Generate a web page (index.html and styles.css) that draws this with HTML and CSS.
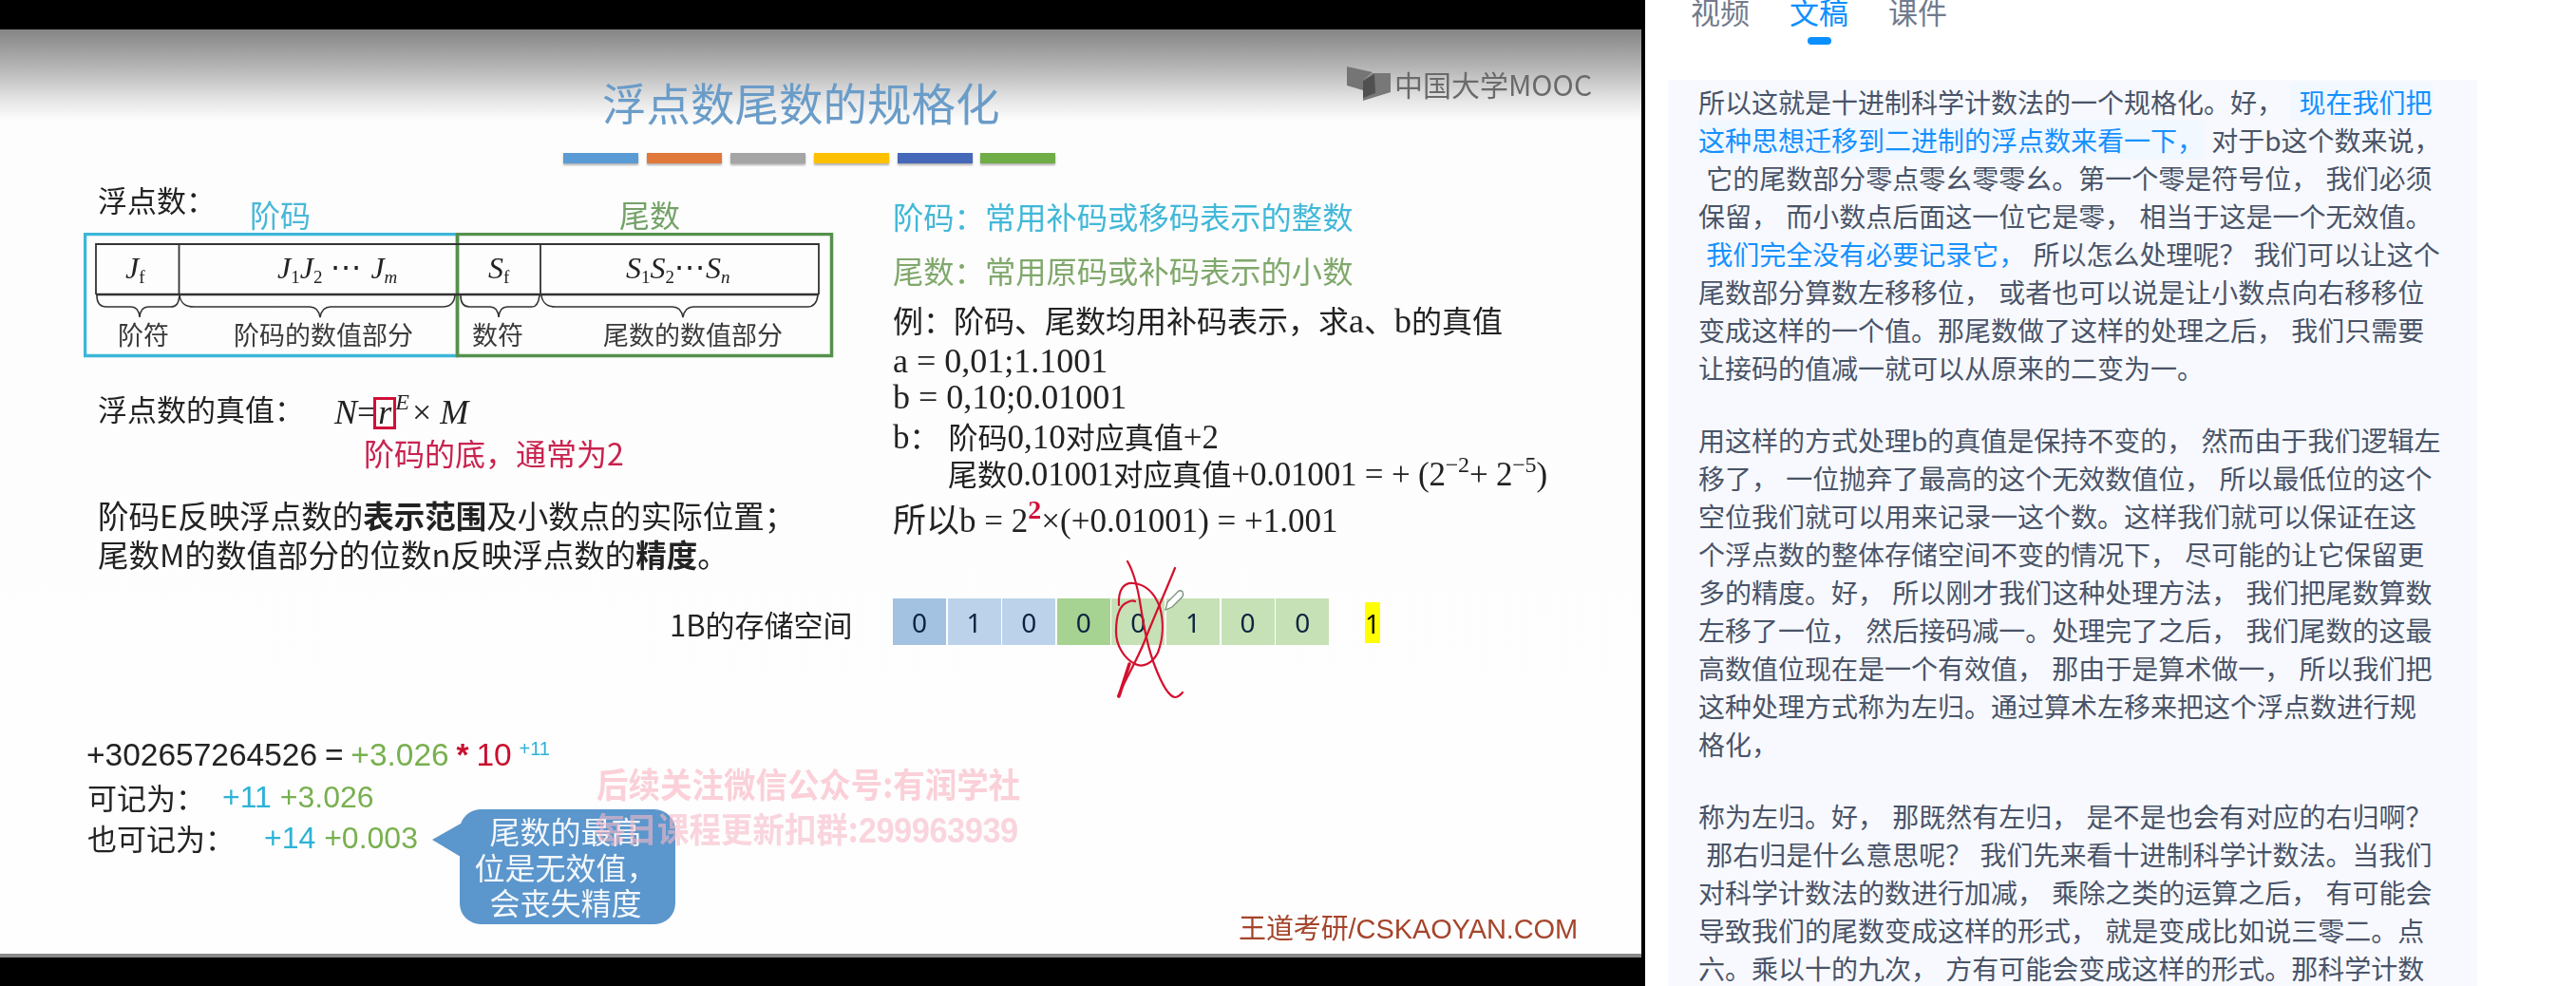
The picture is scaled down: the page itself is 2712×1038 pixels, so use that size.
FILE: index.html
```html
<!DOCTYPE html>
<html lang="zh-CN">
<head>
<meta charset="utf-8">
<title>浮点数尾数的规格化</title>
<link rel="stylesheet" href="styles.css">
</head>
<body>
<div class="page">
  <section class="video">
    <div class="slide">
      <h1 class="item title">浮点数尾数的规格化</h1>
      <div class="item bars">
        <i class="bar bar-blue"></i><i class="bar bar-orange"></i><i class="bar bar-gray"></i><i class="bar bar-yellow"></i><i class="bar bar-indigo"></i><i class="bar bar-green"></i>
      </div>
      <div class="item logo">
        <svg class="logo-mark" viewBox="0 0 46 36" width="46" height="36">
          <path class="logo-a" d="M0 0 L27 6 L17 15 L17 25 L0 20 Z"/>
          <path class="logo-b" d="M27 7 L46 7 L46 27 L17 36 L17 15 Z"/>
          <path class="logo-c" d="M17 15 L29 8 L30 28 L17 33 Z"/>
        </svg>
        <span class="logo-text">中国大学MOOC</span>
      </div>

      <div class="item t31 fu">浮点数：</div>
      <div class="item t32 jm-label">阶码</div>
      <div class="item t32 ws-label">尾数</div>

      <svg class="item format" viewBox="0 0 800 140" width="800" height="140">
        <rect class="box-cyan" x="1.5" y="1.5" width="392" height="128"/>
        <rect class="box-green" x="393.5" y="1.5" width="394" height="128"/>
        <path class="cell-line" d="M13 65 V12 H774 V65 M100.500 12 V65 M481 12 V65"/>
        <path class="cell-base" d="M13 65 H774"/>
        <path class="brace" d="M14 66 C14 74 18 78 24 78 H50 Q58 78 59 89 Q60 78 68 78 H92 C98 78 100 74 101 66"/>
        <path class="brace" d="M101 66 C102 74 108 78 116 78 H238 Q247 78 249 89 Q251 78 260 78 H378 C386 78 390 74 391 66"/>
        <path class="brace" d="M397 66 C397 74 400 78 406 78 H428 Q436 78 437 89 Q438 78 446 78 H472 C477 78 479 74 480 66"/>
        <path class="brace" d="M482 66 C483 74 489 78 497 78 H620 Q629 78 631 89 Q633 78 642 78 H762 C768 78 772 74 773 66"/>
        <text class="math" x="44" y="48">J<tspan class="sub" dy="5">f</tspan></text>
        <text class="math" x="204" y="48">J<tspan class="sub" dy="5">1</tspan><tspan dy="-5">J</tspan><tspan class="sub" dy="5">2</tspan><tspan dy="-5" class="dots"> ⋅⋅⋅ </tspan><tspan>J</tspan><tspan class="sub sub-i" dy="5">m</tspan></text>
        <text class="math" x="426" y="48">S<tspan class="sub" dy="5">f</tspan></text>
        <text class="math" x="571" y="48">S<tspan class="sub" dy="5">1</tspan><tspan dy="-5">S</tspan><tspan class="sub" dy="5">2</tspan><tspan dy="-5" class="dots">⋅⋅⋅</tspan><tspan>S</tspan><tspan class="sub sub-i" dy="5">n</tspan></text>
        <text class="fmt-label" x="36" y="118">阶符</text>
        <text class="fmt-label" x="158" y="118">阶码的数值部分</text>
        <text class="fmt-label" x="409" y="118">数符</text>
        <text class="fmt-label" x="547" y="118">尾数的数值部分</text>
      </svg>

      <div class="item t31 real">浮点数的真值：</div>
      <div class="item formula"><i>N</i>=<i class="r">r</i><sup class="exp">E</sup> × <i>M</i><span class="r-box"></span></div>
      <div class="item t32 base-note">阶码的底，通常为2</div>

      <div class="item desc desc-1">阶码E反映浮点数的<b>表示范围</b>及小数点的实际位置；</div>
      <div class="item desc desc-2">尾数M的数值部分的位数n反映浮点数的<b>精度</b>。</div>

      <div class="item jm-line">阶码：常用补码或移码表示的整数</div>
      <div class="item ws-line">尾数：常用原码或补码表示的小数</div>
      <div class="item example ex-1">例：阶码、尾数均用补码表示，求<span class="n">a</span>、<span class="n">b</span>的真值</div>
      <div class="item example ex-2"><span class="n">a = 0,01;1.1001</span></div>
      <div class="item example ex-3"><span class="n">b = 0,10;0.01001</span></div>
      <div class="item example ex-4"><span class="n">b</span>：<span class="ex-gap">阶码<span class="n">0,10</span>对应真值<span class="n">+2</span></span></div>
      <div class="item example ex-5">尾数<span class="n">0.01001</span>对应真值<span class="n">+0.01001 = + (2<sup>−2</sup>+ 2<sup>−5</sup>)</span></div>
      <div class="item example ex-6">所以b = 2<sup class="sup-red">2</sup>×(+0.01001) = +1.001</div>

      <div class="item store-label">1B的存储空间</div>
      <div class="item cells">
        <span class="cell c-blue-1">0</span><span class="cell c-blue-2">1</span><span class="cell c-blue-2">0</span><span class="cell c-green-1">0</span><span class="cell c-green-2">0</span><span class="cell c-green-2">1</span><span class="cell c-green-2">0</span><span class="cell c-green-2">0</span>
      </div>
      <div class="item lost-bit">1</div>
      <svg class="item scribble" viewBox="0 0 90 160" width="90" height="160">
        <path d="M12 4 C18 14 22 26 26 52 C30 78 34 96 40 112 C46 128 54 146 62 147 C66 147 68 144 70 142"/>
        <path d="M62 11 C52 36 40 62 30 88 C22 108 10 128 2 146"/>
        <path class="thick" d="M14 112 L3 146"/>
        <path d="M3 50 C2 34 8 26 18 27 C30 28 40 36 46 52 C50 66 50 84 44 100 C38 112 28 116 20 112 C8 106 0 92 0 78 C0 62 4 50 12 47 C14 46 18 45 20 46"/>
        <path class="pencil" d="M52 55 L54 47 L65 36 C67 34 69 35 70 36 C71 38 71 39 70 41 L59 52 Z"/>
      </svg>

      <div class="item sci sci-1">+302657264526 <span class="eq">=</span> <span class="green">+3.026</span> <span class="red star">*</span> <span class="red">10</span> <sup class="cyan sci-exp">+11</sup></div>
      <div class="item t31 sci-l2">可记为：</div>
      <div class="item sci sci-v2"><span class="cyan">+11</span> <span class="green">+3.026</span></div>
      <div class="item t31 sci-l3">也可记为：</div>
      <div class="item sci sci-v3"><span class="cyan">+14</span> <span class="green">+0.003</span></div>

      <div class="item watermark wm-1">后续关注微信公众号:有润学社</div>
      <div class="item callout">尾数的最高<br>位是无效值，<br>会丧失精度</div>
      <div class="item watermark wm-2">每日课程更新扣群:<span class="wm-num">299963939</span></div>

      <div class="item brand">王道考研/CSKAOYAN.COM</div>
    </div>
  </section>

  <aside class="panel">
    <nav class="tabs">
      <span class="tab">视频</span>
      <span class="tab tab-active">文稿</span>
      <span class="tab">课件</span>
    </nav>
    <article class="transcript">
<p>所以这就是十进制科学计数法的一个规格化。好， <mark> 现在我们把<br>这种思想迁移到二进制的浮点数来看一下，</mark> 对于b这个数来说，<br> 它的尾数部分零点零幺零零幺。第一个零是符号位， 我们必须<br>保留， 而小数点后面这一位它是零， 相当于这是一个无效值。<br> <em>我们完全没有必要记录它，</em> 所以怎么处理呢？ 我们可以让这个<br>尾数部分算数左移移位， 或者也可以说是让小数点向右移移位<br>变成这样的一个值。那尾数做了这样的处理之后， 我们只需要<br>让接码的值减一就可以从原来的二变为一。</p>
<p>用这样的方式处理b的真值是保持不变的， 然而由于我们逻辑左<br>移了， 一位抛弃了最高的这个无效数值位， 所以最低位的这个<br>空位我们就可以用来记录一这个数。这样我们就可以保证在这<br>个浮点数的整体存储空间不变的情况下， 尽可能的让它保留更<br>多的精度。好， 所以刚才我们这种处理方法， 我们把尾数算数<br>左移了一位， 然后接码减一。处理完了之后， 我们尾数的这最<br>高数值位现在是一个有效值， 那由于是算术做一， 所以我们把<br>这种处理方式称为左归。通过算术左移来把这个浮点数进行规<br>格化，</p>
<p>称为左归。好， 那既然有左归， 是不是也会有对应的右归啊？<br> 那右归是什么意思呢？ 我们先来看十进制科学计数法。当我们<br>对科学计数法的数进行加减， 乘除之类的运算之后， 有可能会<br>导致我们的尾数变成这样的形式， 就是变成比如说三零二。点<br>六。乘以十的九次， 方有可能会变成这样的形式。那科学计数</p>
    </article>
  </aside>
</div>
</body>
</html>
```
FILE: styles.css
```css
* { box-sizing: border-box; }
html, body { margin: 0; padding: 0; background: #fff; }
.page {
  display: flex;
  width: 2712px;
  height: 1038px;
  overflow: hidden;
  font-family: "Noto Sans CJK SC", sans-serif;
}

/* ---------- video frame ---------- */
.video {
  flex: 0 0 1732px;
  height: 1038px;
  padding-top: 31px;
  background: #000;
}
.slide {
  position: relative;
  width: 1728px;
  height: 977px;
  overflow: hidden;
  color: #222;
  background: linear-gradient(#858585 0, #b5b5b5 40px, #e6e6e6 75px, #fdfdfd 96px, #fefefe 100%);
  border-bottom: 4px solid #8a8a8a;
  filter: blur(0.7px);
}
/* slide-local y = page y - 31 */
.item { position: absolute; margin: 0; line-height: 1; white-space: nowrap; font-weight: 400; }
.t31 { font-size: 31px; }
.t32 { font-size: 32px; }

.title { left: 634px; top: 53px; font-size: 46.500px; color: #6a9cc8; }
.bars { left: 593px; top: 130px; display: flex; gap: 8.900px; }
.bar { display: block; width: 79px; height: 11px; box-shadow: 0 2px 2px rgba(0,0,0,.3); }
.bar-blue { background: #5b9bd5; }
.bar-orange { background: #e0783a; }
.bar-gray { background: #a5a5a5; }
.bar-yellow { background: #ffc000; }
.bar-indigo { background: #4668b8; }
.bar-green { background: #70ad47; }

.logo { left: 1418px; top: 39px; display: flex; align-items: flex-start; gap: 4px; color: #6a6a6a; }
.logo-mark { flex: none; }
.logo-a { fill: #757575; }
.logo-b { fill: #787878; }
.logo-c { fill: #505050; }
.logo-text { font-size: 30px; margin-top: 3px; }

.fu { left: 103px; top: 163px; }
.jm-label { left: 263px; top: 178px; color: #48b8d8; }
.ws-label { left: 652px; top: 178px; color: #74a268; }

.format { left: 88px; top: 214px; }
.box-cyan { fill: none; stroke: #3cb6d8; stroke-width: 3.500; }
.box-green { fill: none; stroke: #54914c; stroke-width: 3.500; }
.cell-line { fill: none; stroke: #333; stroke-width: 1.800; }
.cell-base { fill: none; stroke: #333; stroke-width: 2.600; }
.brace { fill: none; stroke: #333; stroke-width: 1.600; }
.math { font-family: "Liberation Serif", serif; font-style: italic; font-size: 32px; fill: #222; }
.sub { font-size: 19px; font-style: normal; }
.sub-i { font-style: italic; }
.dots { font-style: normal; letter-spacing: 1px; }
.fmt-label { font-size: 27px; fill: #3a3a3a; }

.real { left: 103px; top: 383px; }
.formula {
  left: 352px; top: 385px;
  font-family: "Liberation Serif", serif;
  font-size: 36px;
  color: #222;
}
.r { margin-left: 2px; }
.exp { font-size: 24px; font-style: italic; vertical-align: 15px; line-height: 0; margin-left: 4px; margin-right: -6px; }
.r-box {
  position: absolute; left: 41px; top: 2px;
  width: 24px; height: 34px;
  border: 3px solid #d0103a;
}
.base-note { left: 383px; top: 429px; color: #c9234f; }

.desc { left: 103px; font-size: 32.500px; }
.desc b { font-weight: 700; }
.desc-1 { top: 495px; }
.desc-2 { top: 536px; }

.jm-line { left: 940px; top: 180px; font-size: 32.300px; color: #42b8d8; }
.ws-line { left: 940px; top: 237px; font-size: 32.300px; color: #80a86c; }
.example { left: 940px; font-family: "Liberation Serif", "Noto Sans CJK SC", serif; font-size: 32px; color: #222; }
.n { font-size: 36px; }
.example sup { font-size: 24px; line-height: 0; vertical-align: 14px; }
.ex-1 { top: 289px; }
.ex-2 { top: 331px; }
.ex-3 { top: 369px; }
.ex-4 { top: 412px; font-size: 31px; }
.ex-gap { margin-left: 10px; }
.ex-5 { left: 998px; top: 451px; font-size: 31px; }
.ex-4 .n, .ex-5 .n { font-size: 35px; }
.ex-5 .n { letter-spacing: -0.200px; }
.ex-6 { top: 500px; font-size: 35px; }
.example .sup-red { color: #d0103a; font-size: 28px; font-weight: 700; }

.store-label { left: 705px; top: 610px; font-size: 31px; color: #222; }
.cells { left: 940px; top: 599px; display: flex; gap: 1.600px; }
.cell {
  display: flex; align-items: center; justify-content: center;
  width: 56px; height: 49px;
  font-family: "Noto Sans", sans-serif;
  font-size: 28px;
  color: #0c2340;
}
.c-blue-1 { background: #a3c2e2; }
.c-blue-2 { background: #bbd2ea; }
.c-green-1 { background: #a6d292; }
.c-green-2 { background: #c6e1b6; }
.lost-bit {
  left: 1437px; top: 603px;
  display: flex; align-items: center; justify-content: center;
  width: 16px; height: 43px;
  background: #ffff00;
  font-family: "Noto Sans", sans-serif;
  font-size: 28px;
  color: #111;
}
.scribble { left: 1175px; top: 556px; overflow: visible; }
.scribble path { fill: none; stroke: #d4102e; stroke-width: 2.200; stroke-linecap: round; }
.scribble .thick { stroke-width: 3.500; }
.scribble .pencil { stroke: #7a9080; stroke-width: 1.300; fill: #fff; }

.sci { font-family: "Liberation Sans", sans-serif; font-size: 32px; color: #222; }
.sci-1 { left: 91px; top: 747px; font-size: 33.500px; word-spacing: -1.500px; }
.green { color: #78b04f; }
.red { color: #c8102e; }
.cyan { color: #2eb2d6; }
.star { font-weight: 700; }
.sci-exp { font-size: 20px; line-height: 0; vertical-align: 11px; }
.sci-l2 { left: 92px; top: 792px; }
.sci-v2 { left: 234px; top: 792px; }
.sci-l3 { left: 92px; top: 835px; }
.sci-v3 { left: 278px; top: 835px; }

.watermark { color: #fbd0d8; font-weight: 700; font-size: 36px; transform: scaleX(.93); transform-origin: left center; }
.wm-1 { left: 628px; top: 775px; }
.wm-2 { left: 625px; top: 822px; z-index: 3; color: rgba(247, 185, 198, .6); }
.wm-num { font-family: "Liberation Sans", sans-serif; font-size: 37px; letter-spacing: -0.500px; }

.callout {
  left: 484px; top: 821px;
  width: 227px; height: 121px;
  border-radius: 22px;
  background: #5b96cc;
  color: #f4f8fc;
  font-size: 32px;
  line-height: 37.500px;
  text-align: center;
  padding: 4px 4px 0 0;
  z-index: 2;
}
.callout::before {
  content: "";
  position: absolute;
  left: -29px; top: 15px;
  border-style: solid;
  border-width: 17px 30px 18px 0;
  border-color: transparent #5b96cc transparent transparent;
}
.brand { left: 1304px; top: 933px; font-size: 29px; letter-spacing: -0.100px; font-family: "Liberation Sans", "Noto Sans CJK SC", sans-serif; color: #a5452c; }

/* ---------- right panel ---------- */
.panel { flex: 1; min-width: 0; padding-left: 24px; }
.tabs {
  display: flex;
  gap: 42px;
  margin-top: -8px;
  padding-left: 24px;
  height: 92px;
}
.tab {
  position: relative;
  height: 40px;
  font-size: 31px;
  line-height: 40px;
  color: #737b8c;
}
.tab-active { color: #0f8fff; }
.tab-active::after {
  content: "";
  position: absolute;
  left: 50%;
  top: 47px;
  width: 25px;
  height: 8px;
  margin-left: -12.500px;
  border-radius: 4px;
  background: #0a8fff;
}
.transcript {
  width: 852px;
  padding: 3px 0 0 32px;
  background: #f7f9fe;
  font-size: 28px;
  line-height: 40px;
  word-spacing: 2px;
  color: #4a5468;
  min-height: 960px;
}
.transcript p { margin: 0 0 36px; white-space: pre; }
.transcript mark { background: #f1f8ff; color: #1591ff; }
.transcript em { font-style: normal; color: #1591ff; }
```
